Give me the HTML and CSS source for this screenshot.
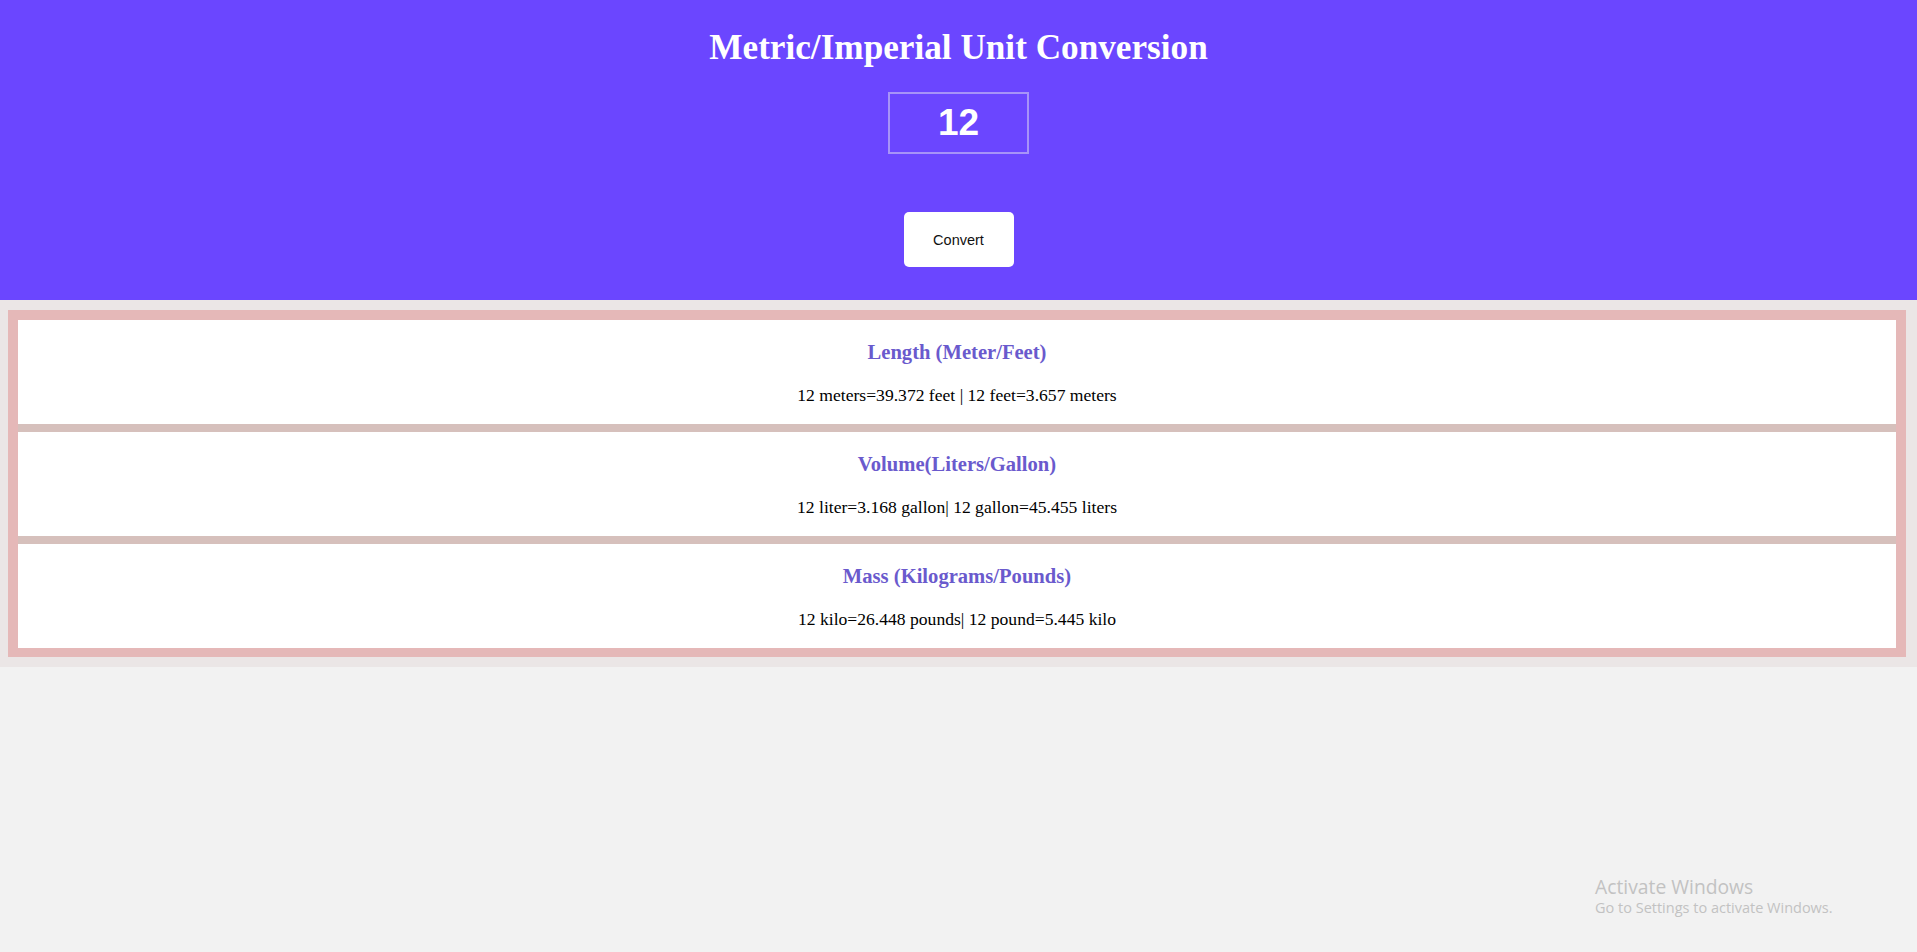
FILE: index.html
```html
<!DOCTYPE html>
<html lang="en">
<head>
<meta charset="utf-8">
<title>Metric/Imperial Unit Conversion</title>
<link rel="stylesheet" href="styles.css">
</head>
<body>
<header class="hero">
  <h1 class="hero-title">Metric/Imperial Unit Conversion</h1>
  <input class="hero-input" type="text" value="12">
  <button class="hero-button" type="button">Convert</button>
</header>
<section class="results">
  <div class="results-box">
    <div class="card">
      <h3 class="card-title">Length (Meter/Feet)</h3>
      <p class="card-text">12 meters=39.372 feet | 12 feet=3.657 meters</p>
    </div>
    <div class="card">
      <h3 class="card-title">Volume(Liters/Gallon)</h3>
      <p class="card-text">12 liter=3.168 gallon| 12 gallon=45.455 liters</p>
    </div>
    <div class="card">
      <h3 class="card-title">Mass (Kilograms/Pounds)</h3>
      <p class="card-text">12 kilo=26.448 pounds| 12 pound=5.445 kilo</p>
    </div>
  </div>
</section>
<div class="watermark">
  <div class="watermark-title">Activate Windows</div>
  <div class="watermark-sub">Go to Settings to activate Windows.</div>
</div>
</body>
</html>
```
FILE: styles.css
```css
html, body {
  margin: 0;
  padding: 0;
}
body {
  background: #f2f2f2;
  font-family: "Liberation Serif", "Times New Roman", serif;
  min-height: 952px;
  position: relative;
}
.hero {
  background: #6b46ff;
  height: 300px;
  box-sizing: border-box;
  padding-top: 28px;
  display: flex;
  flex-direction: column;
  align-items: center;
}
.hero-title {
  margin: 0;
  font-size: 35.2px;
  font-weight: bold;
  color: #ffffff;
  line-height: 40px;
}
.hero-input {
  margin-top: 24px;
  width: 141px;
  height: 62px;
  box-sizing: border-box;
  border: 2px solid #a793f8;
  background: transparent;
  color: #ffffff;
  font-family: "Liberation Sans", Arial, sans-serif;
  font-weight: bold;
  font-size: 37px;
  text-align: center;
  padding: 0;
  outline: none;
}
.hero-button {
  margin-top: 58px;
  width: 110px;
  height: 55px;
  border: none;
  border-radius: 5px;
  background: #ffffff;
  color: #111111;
  font-family: "Liberation Sans", Arial, sans-serif;
  font-size: 14.5px;
  padding: 0;
}
.results {
  background: #ebe6e6;
  padding: 10px 11px 10px 8px;
}
.results-box {
  border: 10px solid #e5b8b8;
  border-bottom-width: 9px;
  background: #d6c0bc;
  display: flex;
  flex-direction: column;
  gap: 8px;
}
.card {
  background: #ffffff;
  text-align: center;
  padding: 21px 0 0;
  height: 104px;
  box-sizing: border-box;
}
.card-title {
  margin: 0;
  font-size: 20.6px;
  line-height: 23px;
  font-weight: bold;
  color: #6a5acd;
}
.card-text {
  margin: 21px 0 0;
  font-size: 17.6px;
  line-height: 20px;
  color: #000000;
}
.watermark {
  position: absolute;
  left: 1595px;
  top: 875px;
  font-family: "Open Sans", "Noto Sans", sans-serif;
  color: #c2c2c2;
}
.watermark-title {
  font-size: 19.3px;
  line-height: 24px;
}
.watermark-sub {
  font-size: 14.5px;
  line-height: 18px;
}
```
